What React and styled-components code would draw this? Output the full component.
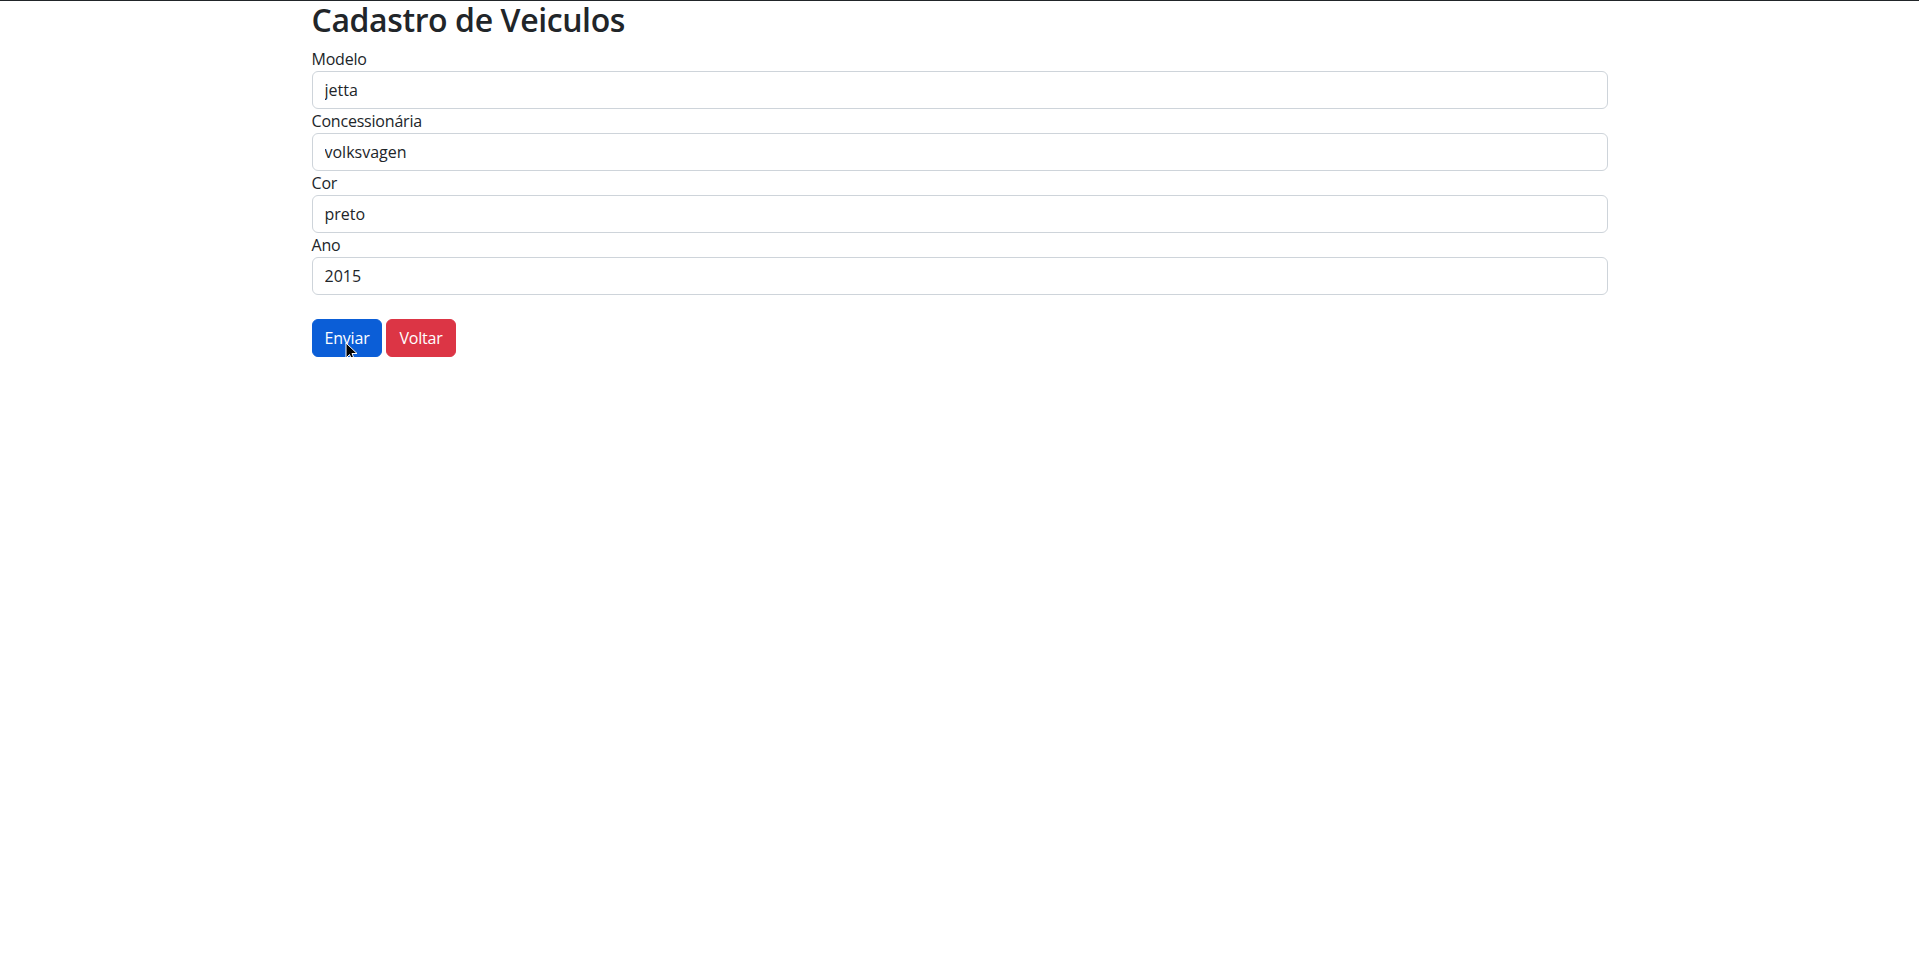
import React from 'react'
import styled, { createGlobalStyle } from 'styled-components'

const GlobalStyle = createGlobalStyle`
  html, body {
    margin: 0;
    padding: 0;
    background: #fff;
  }
  body {
    font-family: "Open Sans", "Noto Sans", sans-serif;
    font-size: 16px;
    line-height: 1.5;
    color: #212529;
    border-top: 1px solid #212529;
  }
  * { box-sizing: border-box; }
`

const Container = styled.div`
  width: 100%;
  max-width: 1320px;
  margin: 0 auto;
  padding: 0 12px;
`

const Title = styled.h2`
  margin: 0 0 8px;
  font-size: 32px;
  font-weight: 600;
  letter-spacing: -0.4px;
  line-height: 1.2;
`

const Field = styled.div`
  display: flex;
  flex-direction: column;
`

const Label = styled.label`
  font-size: 16px;
  line-height: 24px;
  letter-spacing: -0.2px;
`

const Input = styled.input`
  display: block;
  width: 100%;
  height: 38px;
  padding: 6px 12px;
  font: inherit;
  color: #212529;
  background: #fff;
  border: 1px solid #ced4da;
  border-radius: 6px;
  outline: none;
`

const Actions = styled.div`
  margin-top: 24px;
  display: flex;
  gap: 4px;
  position: relative;
`

const Button = styled.button`
  height: 38px;
  padding: 6px 12px;
  font: inherit;
  letter-spacing: -0.2px;
  color: #fff;
  border: 1px solid ${({ $bg }) => $bg};
  background: ${({ $bg }) => $bg};
  border-radius: 6px;
  cursor: pointer;
`

const Pointer = styled.svg`
  position: absolute;
  left: 33px;
  top: 23px;
  pointer-events: none;
`

const fields = [
  { label: 'Modelo', value: 'jetta' },
  { label: 'Concessionária', value: 'volksvagen' },
  { label: 'Cor', value: 'preto' },
  { label: 'Ano', value: '2015' },
]

export default function App() {
  return (
    <>
      <GlobalStyle />
      <Container>
        <Title>Cadastro de Veiculos</Title>
        <form onSubmit={(e) => e.preventDefault()}>
          {fields.map((f) => (
            <Field key={f.label}>
              <Label>{f.label}</Label>
              <Input type="text" defaultValue={f.value} />
            </Field>
          ))}
          <Actions>
            <Button type="submit" $bg="#0b5ed7">Enviar</Button>
            <Button type="button" $bg="#dc3545">Voltar</Button>
            <Pointer width="13" height="20" viewBox="0 0 13 20">
              <path d="M1 1 L1 16 L4.5 12.5 L7 18.5 L9.5 17.5 L7 11.5 L12 11.5 Z" fill="#000" stroke="#fff" strokeWidth="1" strokeLinejoin="round" />
            </Pointer>
          </Actions>
        </form>
      </Container>
    </>
  )
}
